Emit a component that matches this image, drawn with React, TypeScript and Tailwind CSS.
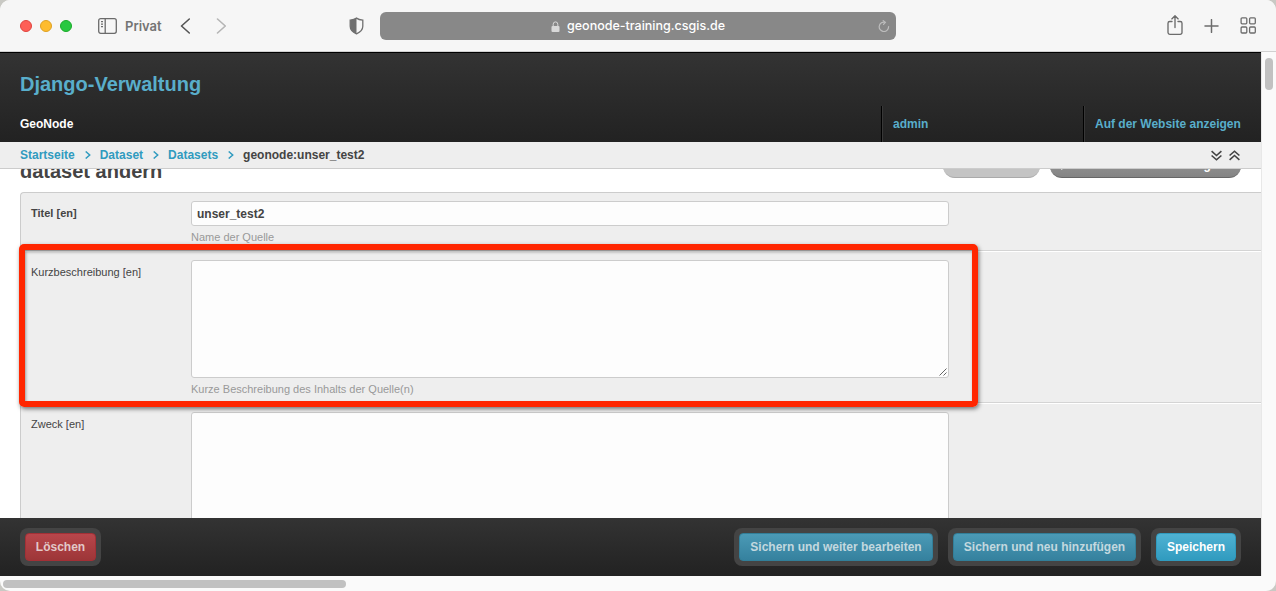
import type { ReactNode } from "react";

function WindowBar() {
  return (
    <header className="flex h-[52px] w-full shrink-0 items-center border-b border-[#d0d0d0] bg-[#f6f6f6] font-[Inter,sans-serif]">
      <div className="ml-5 flex gap-2">
        <span className="h-3 w-3 rounded-full border border-[#e0443e] bg-[#fe5f57]" />
        <span className="h-3 w-3 rounded-full border border-[#dea123] bg-[#febc2e]" />
        <span className="h-3 w-3 rounded-full border border-[#1aab29] bg-[#28c840]" />
      </div>
      <svg className="ml-[26px] h-4 w-[19px]" viewBox="0 0 19 16" fill="none" stroke="#6b6b6b" strokeWidth="1.3">
        <rect x=".7" y=".7" width="17.6" height="14.6" rx="2" />
        <path d="M7.2 .7V15.3M3 3.7h2M3 6.2h2M3 8.7h2" />
      </svg>
      <span className="ml-2 w-[38px] pt-px text-[13px] font-semibold leading-4 text-[#747474]">Privat</span>
      <svg className="ml-[17px] h-4 w-[11px]" viewBox="0 0 11 16" fill="none" stroke="#555" strokeWidth="1.6" strokeLinecap="round" strokeLinejoin="round">
        <path d="M9.3 1 1.5 8l7.8 7" />
      </svg>
      <svg className="ml-[25px] h-4 w-[11px]" viewBox="0 0 11 16" fill="none" stroke="#b5b5b5" strokeWidth="1.6" strokeLinecap="round" strokeLinejoin="round">
        <path d="m1.5 1 7.8 7-7.8 7" />
      </svg>
      <svg className="ml-[122px] h-[18px] w-[15px]" viewBox="0 0 15 18">
        <path d="M7.5 1.1C5.7 2.4 3.7 2.9 1.2 3.200v6.100c0 3.600 2.600 5.900 6.300 7.600 3.700-1.700 6.300-4 6.300-7.600V3.200c-2.500-.3-4.500-.8-6.300-2.100Z" fill="none" stroke="#707070" strokeWidth="1.300" />
        <path d="M7.500 1.100C5.700 2.400 3.700 2.900 1.200 3.200v6.100c0 3.600 2.600 5.900 6.300 7.600Z" fill="#707070" />
      </svg>
      <div className="ml-4 flex h-7 w-[516px] items-center rounded-md bg-[#888]">
        <svg className="ml-[171px] mt-px h-[11px] w-[9px]" viewBox="0 0 9 11">
          <rect x=".5" y="5" width="8" height="6" rx="1" fill="#d9d9d9" />
          <path d="M2.2 5V3.2a2.3 2.3 0 0 1 4.6 0V5" fill="none" stroke="#d9d9d9" />
        </svg>
        <span className="ml-[7px] mt-px w-[160px] whitespace-nowrap text-[12.5px] font-medium leading-4 text-white">geonode-training.csgis.de</span>
        <svg className="ml-[151px] mt-px h-3 w-3" viewBox="0 0 12 12" fill="none" stroke="#bdbdbd" strokeWidth="1.2" strokeLinecap="round">
          <path d="M10.6 6.6A4.7 4.7 0 1 1 7.2 2.3M5.2.6l2.2 1.7-1.9 2" />
        </svg>
      </div>
      <svg className="ml-[271px] h-[21px] w-4" viewBox="0 0 16 21" fill="none" stroke="#6c6c6c" strokeWidth="1.35" strokeLinecap="round" strokeLinejoin="round">
        <path d="M5 6.500H2.800A1.800 1.800 0 0 0 1 8.300V17.500a1.800 1.800 0 0 0 1.800 1.800h10.400A1.800 1.800 0 0 0 15 17.500V8.300A1.800 1.800 0 0 0 13.200 6.500H11M8 12.500V.9M4.800 3.900 8 .8l3.200 3.100" />
      </svg>
      <svg className="ml-[21px] h-[14px] w-[15px]" viewBox="0 0 15 14" fill="none" stroke="#6c6c6c" strokeWidth="1.5" strokeLinecap="round">
        <path d="M7.500.7v12.600M1 7h13" />
      </svg>
      <svg className="ml-[21px] h-[17px] w-4" viewBox="0 0 16 17" fill="none" stroke="#6c6c6c" strokeWidth="1.300">
        <rect x="1.100" y=".8" width="5.700" height="6" rx="1" />
        <rect x="9.600" y=".8" width="5.700" height="6" rx="1" />
        <rect x="1.100" y="10" width="5.700" height="6" rx="1" />
        <rect x="9.600" y="10" width="5.700" height="6" rx="1" />
      </svg>
    </header>
  );
}

function Crumb({ children }: { children: ReactNode }) {
  return (
    <>
      <a className="text-[#309bbf]">{children}</a>
      <svg className="ml-[10px] mr-[9px] h-2 w-[6px] self-center" viewBox="0 0 6 8" fill="none" stroke="#309bbf" strokeWidth="1.500">
        <path d="m.7.5 4 3.500-4 3.500" />
      </svg>
    </>
  );
}

function DoubleChevron({ up = false }: { up?: boolean }) {
  return (
    <svg className={up ? "h-[11px] w-[11px] rotate-180" : "h-[11px] w-[11px]"} viewBox="0 0 11 11" fill="none" stroke="#444" strokeWidth="1.600">
      <path d="m.6 1.200 4.900 4.300 4.900-4.300M.6 5.500l4.900 4.300 4.900-4.300" />
    </svg>
  );
}

function AdminHeader() {
  return (
    <div className="flex h-[90px] shrink-0 flex-col border-t border-black bg-linear-to-b from-[#333] to-[#222]">
      <h1 className="h-[53px] pl-5 pt-[19px] text-[20px] font-bold leading-[25px] text-[#59aecb]">Django-Verwaltung</h1>
      <div className="flex h-9 text-[12px] font-bold leading-[36px] text-[#59aecb]">
        <span className="w-[881px] pl-5 text-white">GeoNode</span>
        <a className="w-[202px] border-l border-black pl-[11px] shadow-[inset_1px_0_0_#383838]">admin</a>
        <a className="flex-1 whitespace-nowrap border-l border-black pl-[11px] shadow-[inset_1px_0_0_#383838]">Auf der Website anzeigen</a>
      </div>
    </div>
  );
}

function FormRow({ label, bold = false, help, className, children }: { label: string; bold?: boolean; help?: string; className: string; children: ReactNode }) {
  return (
    <div className={`flex border-b border-[#d4d4d4] pl-[10px] pt-2 ${className}`}>
      <label className={`w-[160px] shrink-0 pt-[5px] text-[11px] leading-[15px] ${bold ? "font-bold" : ""}`}>{label}</label>
      <div className="w-[758px]">
        {children}
        {help && <p className="mt-1 text-[11px] leading-[15px] text-[#999]">{help}</p>}
      </div>
    </div>
  );
}

function FooterButton({ children, className }: { children: ReactNode; className: string }) {
  return (
    <div className="rounded-lg bg-[#444] p-[5px]">
      <button className={`block h-7 whitespace-nowrap rounded-[4px] border text-center text-[12px] font-bold leading-[26px] ${className}`}>{children}</button>
    </div>
  );
}

export default function App() {
  return (
    <div className="h-[591px] w-[1276px] overflow-hidden bg-[#c9c9c4] font-['Liberation_Sans',Arial,sans-serif] text-[#444]">
      <div className="flex h-[591px] w-full flex-col overflow-hidden rounded-[10px] bg-[#fafafa]">
        <WindowBar />
        <div className="flex h-[524px] shrink-0">
          <main className="flex w-[1261px] shrink-0 flex-col overflow-hidden bg-white">
            <AdminHeader />
            <nav className="flex h-[27px] shrink-0 items-center justify-between border-b border-[#ccc] bg-[#eee] pl-5 pr-[21px] text-[12px] font-bold leading-[26px]">
              <div className="flex">
                <Crumb>Startseite</Crumb>
                <Crumb>Dataset</Crumb>
                <Crumb>Datasets</Crumb>
                <span>geonode:unser_test2</span>
              </div>
              <div className="flex gap-[7px]">
                <DoubleChevron />
                <DoubleChevron up />
              </div>
            </nav>
            <section className="relative h-[349px] shrink-0 overflow-hidden">
              <div className="-mt-[15px] flex h-[38px] justify-between pl-5 pr-5">
                <h2 className="pt-[4px] text-[20px] font-bold leading-[26px]">dataset ändern</h2>
                <div className="flex gap-[10px] text-[12px] font-bold text-white">
                  <span className="h-6 w-[97px] rounded-full border-b border-[#aaa] bg-[#c4c4c4]" />
                  <span className="flex h-6 w-[191px] rounded-full border-b border-[#666] bg-linear-to-b from-[#999] to-[#848484] pl-[9px] leading-[22px]">
                    <svg className="mt-[7px] h-[9px] w-[5px]" viewBox="0 0 5 9" fill="none" stroke="#fff" strokeWidth="1.500">
                      <path d="m3 8.500-2-4 2-4" />
                    </svg>
                    <span className="pl-[15px]">Auf der Website anzeigen</span>
                  </span>
                </div>
              </div>
              <form className="ml-5 rounded-tl-[4px] border-l border-t border-[#ccc] bg-[#eee]">
                <FormRow label="Titel [en]" bold help="Name der Quelle" className="h-[58px]">
                  <div className="h-[25px] rounded-[3px] border border-[#ccc] bg-[#fdfdfd] px-[5px] text-[12px] font-bold leading-[24px]">unser_test2</div>
                </FormRow>
                <FormRow label="Kurzbeschreibung [en]" help="Kurze Beschreibung des Inhalts der Quelle(n)" className="h-[152px] border-t border-t-white">
                  <div className="flex h-[118px] items-end justify-end rounded-[3px] border border-[#ccc] bg-[#fdfdfd] p-px">
                    <svg className="h-2 w-2" viewBox="0 0 8 8" stroke="#555" strokeWidth=".9">
                      <path d="M.5 7.500 7.500.5M4.500 7.500l3-3" />
                    </svg>
                  </div>
                </FormRow>
                <FormRow label="Zweck [en]" className="h-[152px] border-t border-t-white">
                  <div className="h-[118px] rounded-[3px] border border-[#ccc] bg-[#fdfdfd]" />
                </FormRow>
              </form>
              <div className="absolute left-[19px] top-[75px] h-[163px] w-[959px] rounded-[5px] border-[6px] border-[#ff2600] shadow-[1px_2px_4px_rgba(0,0,0,.5),inset_1px_2px_3px_rgba(0,0,0,.35)]" />
            </section>
            <footer className="flex h-[58px] shrink-0 items-center justify-between bg-linear-to-b from-[#333] to-[#222] pl-5 pr-5">
              <FooterButton className="w-[71px] border-[#a33036] bg-linear-to-b from-[#b8464b] to-[#9d3638] text-[#e2c8c9]">Löschen</FooterButton>
              <div className="flex gap-[10px]">
                <FooterButton className="w-[194px] border-[#327f99] bg-linear-to-b from-[#4b9ab6] to-[#35819e] text-[#c3d8df]">Sichern und weiter bearbeiten</FooterButton>
                <FooterButton className="w-[183px] border-[#327f99] bg-linear-to-b from-[#4b9ab6] to-[#35819e] text-[#c3d8df]">Sichern und neu hinzufügen</FooterButton>
                <FooterButton className="w-[80px] border-[#309bbf] bg-linear-to-b from-[#4fb2d3] to-[#309bbf] text-white">Speichern</FooterButton>
              </div>
            </footer>
          </main>
          <div className="flex flex-1 justify-center border-l border-[#e8e8e8] pt-[6px]">
            <span className="h-8 w-2 rounded-full bg-[#c1c1c1]" />
          </div>
        </div>
        <div className="flex h-[15px] items-center pl-[3px]">
          <span className="h-2 w-[343px] rounded-full bg-[#c1c1c1]" />
        </div>
      </div>
    </div>
  );
}
